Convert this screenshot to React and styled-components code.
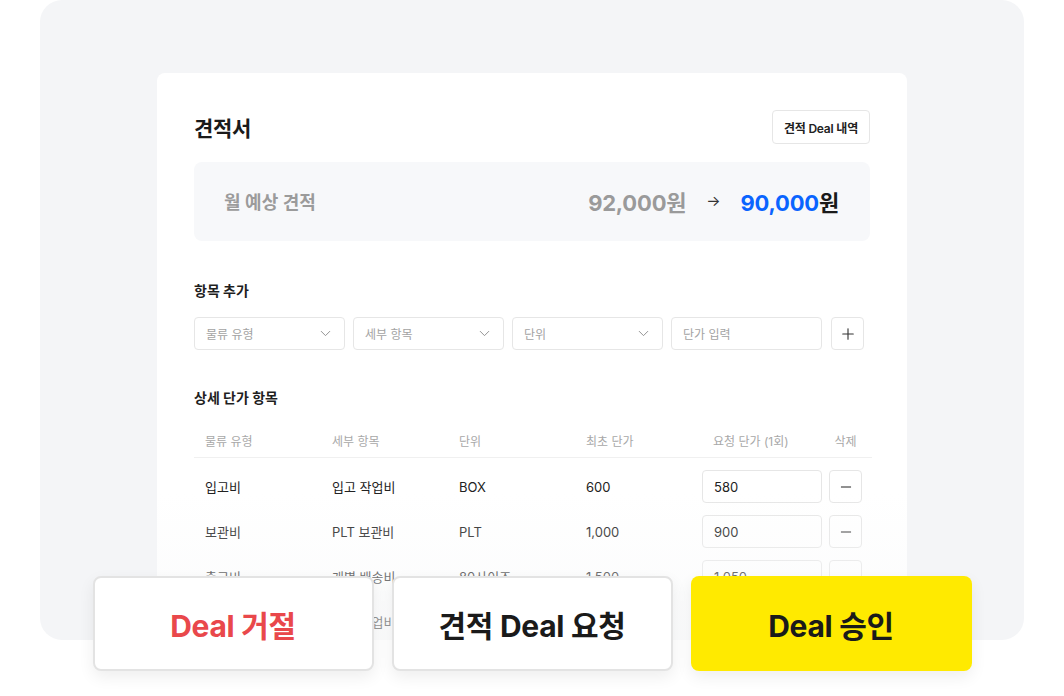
import React from "react";
import styled, { createGlobalStyle } from "styled-components";
import { ChevronDown, Plus, Minus } from "lucide-react";

const GlobalStyle = createGlobalStyle`
  * { box-sizing: border-box; }
  body {
    margin: 0;
    background: #ffffff;
    font-family: Inter, "Noto Sans CJK KR", sans-serif;
    color: #1f1f1f;
  }
`;

const rows = [
  { type: "입고비", item: "입고 작업비", unit: "BOX", base: "600", req: "580" },
  { type: "보관비", item: "PLT 보관비", unit: "PLT", base: "1,000", req: "900" },
  { type: "출고비", item: "개별 배송비", unit: "80사이즈", base: "1,500", req: "1,050" },
  { type: "반품비", item: "반품 작업비", unit: "BOX", base: "800", req: "700" },
];

const App = () => {
  return (
    <Page>
      <GlobalStyle />
      <Panel>
        <Card>
          <Header>
            <Title>견적서</Title>
            <HistoryButton>견적 Deal 내역</HistoryButton>
          </Header>

          <Summary>
            <SummaryLabel>월 예상 견적</SummaryLabel>
            <Amounts>
              <OldAmount>92,000원</OldAmount>
              <Arrow>→</Arrow>
              <NewAmount>
                <span>90,000</span>원
              </NewAmount>
            </Amounts>
          </Summary>

          <SectionTitle>항목 추가</SectionTitle>
          <AddRow>
            <Field>
              물류 유형
              <ChevronDown size={17} strokeWidth={1.3} color="#8a8a8a" />
            </Field>
            <Field>
              세부 항목
              <ChevronDown size={17} strokeWidth={1.3} color="#8a8a8a" />
            </Field>
            <Field>
              단위
              <ChevronDown size={17} strokeWidth={1.3} color="#8a8a8a" />
            </Field>
            <Field>단가 입력</Field>
            <IconBox $left={1}>
              <Plus size={18} strokeWidth={1.5} color="#333" />
            </IconBox>
          </AddRow>

          <SectionTitle $top={38}>상세 단가 항목</SectionTitle>
          <Table>
            <HeadRow>
              <HeadCell>물류 유형</HeadCell>
              <HeadCell>세부 항목</HeadCell>
              <HeadCell>단위</HeadCell>
              <HeadCell>최초 단가</HeadCell>
              <HeadCell $pad={11}>요청 단가 (1회)</HeadCell>
              <HeadCell $center>삭제</HeadCell>
            </HeadRow>
            {rows.map((r) => (
              <BodyRow key={r.type}>
                <Cell>{r.type}</Cell>
                <Cell>{r.item}</Cell>
                <Cell>{r.unit}</Cell>
                <Cell>{r.base}</Cell>
                <PriceInput>{r.req}</PriceInput>
                <IconBox>
                  <Minus size={16} strokeWidth={1.5} color="#222" />
                </IconBox>
              </BodyRow>
            ))}
          </Table>
          <Fade />
        </Card>
      </Panel>

      <ActionBar>
        <ActionButton $tone="reject">Deal 거절</ActionButton>
        <ActionButton>견적 Deal 요청</ActionButton>
        <ActionButton $tone="approve">Deal 승인</ActionButton>
      </ActionBar>
    </Page>
  );
};

// Style
const Page = styled.div`
  position: relative;
  width: 1064px;
  height: 696px;
  overflow: hidden;
`;

const Panel = styled.div`
  margin: 0 40px;
  height: 640px;
  background: #f4f5f7;
  border-radius: 22px;
  overflow: hidden;
  padding-top: 73px;
`;

const Card = styled.div`
  position: relative;
  width: 750px;
  height: 640px;
  margin: 0 auto;
  background: #ffffff;
  border-radius: 8px;
  padding: 37px 37px 0;
`;

const Header = styled.div`
  display: flex;
  align-items: center;
  justify-content: space-between;
  height: 34px;
`;

const Title = styled.h1`
  margin: 0;
  font-size: 21px;
  font-weight: 700;
  color: #1a1a1a;
  letter-spacing: -0.3px;
`;

const HistoryButton = styled.div`
  height: 34px;
  padding: 0 11px;
  display: flex;
  align-items: center;
  border: 1px solid #e6e6e6;
  border-radius: 4px;
  font-size: 12px;
  font-weight: 600;
  color: #222;
  letter-spacing: -0.2px;
`;

const Summary = styled.div`
  margin-top: 18px;
  height: 79px;
  background: #f7f8fa;
  border-radius: 8px;
  display: flex;
  align-items: center;
  justify-content: space-between;
  padding: 0 31px 2px 30px;
`;

const SummaryLabel = styled.div`
  font-size: 18px;
  font-weight: 600;
  color: #9b9b9b;
`;

const Amounts = styled.div`
  display: flex;
  align-items: center;
  font-size: 22px;
  font-weight: 700;
  letter-spacing: -0.2px;
`;

const OldAmount = styled.span`
  color: #9a9a9a;
`;

const Arrow = styled.span`
  margin: 0 20px;
  font-size: 15px;
  font-weight: 400;
  color: #333;
`;

const NewAmount = styled.span`
  color: #1a1a1a;
  span {
    color: #0a64ff;
  }
`;

const SectionTitle = styled.h3`
  margin: ${(p) => p.$top || 40}px 0 0;
  font-size: 14px;
  font-weight: 700;
  color: #1f1f1f;
  line-height: 20px;
`;

const AddRow = styled.div`
  display: flex;
  gap: 8px;
  margin-top: 16px;
`;

const Field = styled.div`
  width: 151px;
  height: 33px;
  border: 1px solid #e6e6e6;
  border-radius: 4px;
  display: flex;
  align-items: center;
  justify-content: space-between;
  padding: 0 10px 0 11px;
  font-size: 12px;
  color: #a3a3a3;
`;

const IconBox = styled.div`
  width: 33px;
  height: 33px;
  border: 1px solid #e6e6e6;
  border-radius: 4px;
  display: flex;
  align-items: center;
  justify-content: center;
  background: #fff;
  margin-left: ${(p) => p.$left || 0}px;
`;

const Table = styled.div`
  margin-top: 15px;
  width: 678px;
`;

const grid = `
  display: grid;
  grid-template-columns: 127px 127px 127px 116px 127px 33px;
  padding-left: 11px;
  align-items: center;
`;

const HeadRow = styled.div`
  ${grid}
  height: 35px;
  border-bottom: 1px solid #f0f0f0;
`;

const HeadCell = styled.div`
  font-size: 12px;
  color: #a8a8a8;
  padding-left: ${(p) => p.$pad || 0}px;
  text-align: ${(p) => (p.$center ? "center" : "left")};
  white-space: nowrap;
`;

const BodyRow = styled.div`
  ${grid}
  height: 45px;
  &:nth-child(2) {
    margin-top: 6px;
  }
`;

const Cell = styled.div`
  font-size: 13px;
  color: #222;
  white-space: nowrap;
`;

const PriceInput = styled.div`
  width: 120px;
  height: 33px;
  border: 1px solid #e6e6e6;
  border-radius: 4px;
  display: flex;
  align-items: center;
  padding-left: 11px;
  font-size: 13px;
  color: #222;
`;

const Fade = styled.div`
  position: absolute;
  left: 0;
  right: 0;
  top: 420px;
  bottom: 0;
  background: linear-gradient(
    to bottom,
    rgba(248, 249, 250, 0) 0%,
    rgba(248, 249, 250, 0.4) 40%,
    rgba(248, 249, 250, 0.8) 100%
  );
  pointer-events: none;
`;

const ActionBar = styled.div`
  position: absolute;
  left: 0;
  right: 0;
  top: 576px;
  display: flex;
  justify-content: center;
  gap: 18px;
`;

const ActionButton = styled.div`
  width: 281px;
  height: 95px;
  border-radius: 8px;
  display: flex;
  align-items: center;
  justify-content: center;
  font-size: 30px;
  font-weight: 700;
  letter-spacing: -0.3px;
  box-shadow: 0 6px 16px rgba(0, 0, 0, 0.07);
  background: ${(p) => (p.$tone === "approve" ? "#ffea00" : "#ffffff")};
  border: ${(p) => (p.$tone === "approve" ? "none" : "2px solid #e3e3e3")};
  color: ${(p) => (p.$tone === "reject" ? "#e9484b" : "#1a1a1a")};
`;

export default App;
